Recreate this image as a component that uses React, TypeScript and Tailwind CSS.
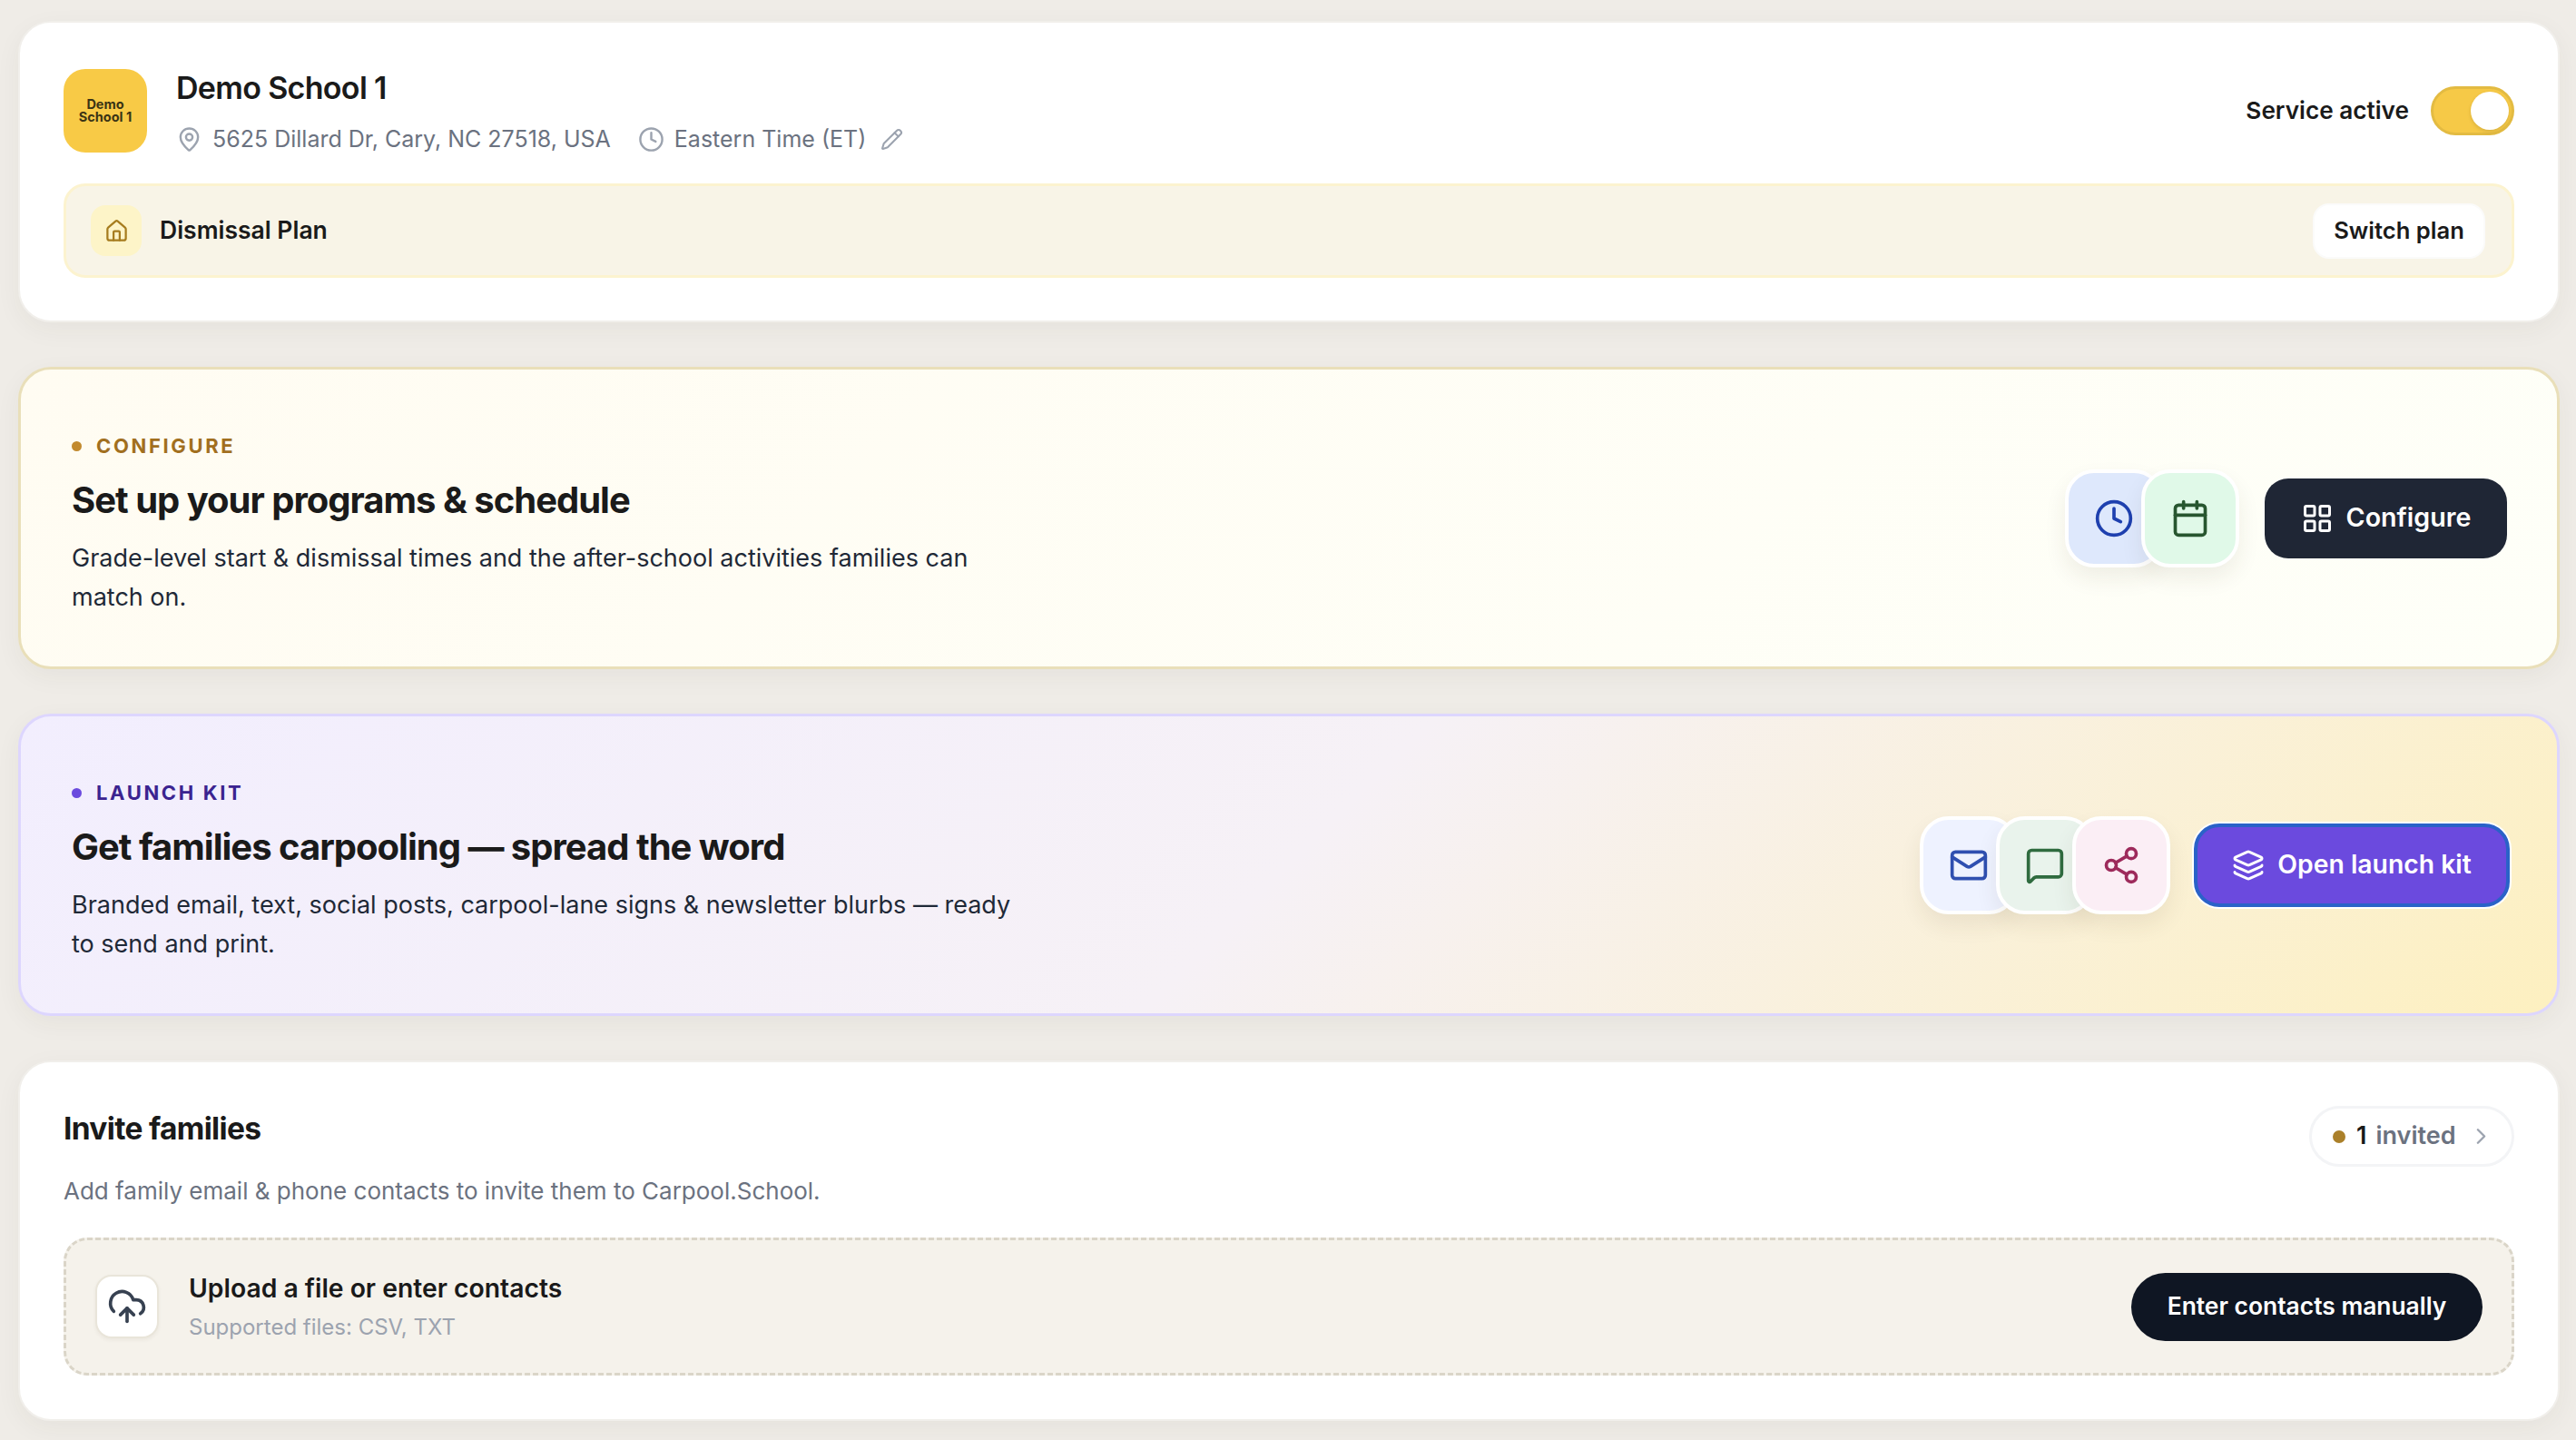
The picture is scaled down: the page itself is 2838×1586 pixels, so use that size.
import React from 'react';
import {
  Calendar,
  ChevronRight,
  Clock,
  CloudUpload,
  House,
  Layers,
  LayoutGrid,
  Mail,
  MapPin,
  MessageSquare,
  Pencil,
  Share2,
} from 'lucide-react';

const Tile: React.FC<{ className: string; first?: boolean; children: React.ReactNode }> = ({ className, first, children }) => (
  <div
    className={`flex h-[108px] w-[108px] items-center justify-center rounded-[32px] border-[4px] border-white shadow-[0_12px_24px_rgba(60,50,20,0.08)] ${first ? '' : '-ml-[24px]'} ${className}`}
  >
    {children}
  </div>
);

export default function App() {
  return (
    <div className="flex h-[1586px] flex-col gap-[49px] overflow-hidden bg-[#efece7] pb-[22px] pl-[20px] pr-[18px] pt-[23px] font-['Inter',sans-serif] text-[#1a1a1a]">
      {/* School header */}
      <section className="h-[332px] shrink-0 rounded-[36px] border-2 border-[#f1efeb] bg-white px-[48px] pt-[50px] shadow-[0_8px_28px_rgba(60,50,30,0.05)]">
        <div className="flex items-center justify-between">
          <div className="flex items-center gap-[32px]">
            <div className="flex h-[92px] w-[92px] items-center justify-center rounded-[24px] bg-[#f8ca46] text-center text-[14.5px] font-bold leading-[14.5px] text-[#3a3314]">
              Demo
              <br />
              School 1
            </div>
            <div>
              <h1 className="text-[34px] font-semibold leading-[44px] tracking-[-0.02em]">Demo School 1</h1>
              <div className="mt-[18px] flex items-center text-[25px] leading-[32px] text-[#6b7280]">
                <MapPin className="mr-[11px] h-[29px] w-[29px] text-[#9ca3af]" />
                <span>5625 Dillard Dr, Cary, NC 27518, USA</span>
                <Clock className="ml-[30px] mr-[11px] h-[29px] w-[29px] text-[#9ca3af]" />
                <span>Eastern Time (ET)</span>
                <Pencil className="ml-[16px] h-[25px] w-[25px] text-[#9ca3af]" />
              </div>
            </div>
          </div>
          <div className="flex items-center gap-[24px]">
            <span className="text-[26.2px] font-semibold">Service active</span>
            <div className="flex h-[54px] w-[92px] items-center justify-end rounded-full border-[3px] border-[#e3bb42] bg-[#f6c947] pr-[3px]">
              <div className="h-[42px] w-[42px] rounded-full bg-white shadow-[0_2px_4px_rgba(0,0,0,0.12)]" />
            </div>
          </div>
        </div>
        <div className="mt-[33px] flex h-[104px] items-center justify-between rounded-[24px] border-[3px] border-[#fcf3cf] bg-[#f8f4e7] pl-[27px] pr-[29px]">
          <div className="flex items-center gap-[20px]">
            <div className="flex h-[56px] w-[56px] items-center justify-center rounded-[16px] bg-[#fdf4c8]">
              <House className="h-[27px] w-[27px] text-[#a67c1e]" />
            </div>
            <span className="text-[26.5px] font-semibold">Dismissal Plan</span>
          </div>
          <button className="h-[61px] w-[190px] rounded-[18px] border-2 border-[#fbfbfa] bg-white text-[25.6px] font-semibold">
            Switch plan
          </button>
        </div>
      </section>

      {/* Configure */}
      <section className="flex h-[333px] shrink-0 items-center justify-between rounded-[36px] border-[3px] border-[#e9dfb9] bg-[linear-gradient(135deg,#fffcf2,#fefff8)] pl-[56px] pr-[55px] shadow-[0_8px_28px_rgba(60,50,30,0.05)]">
        <div className="w-[1050px] pt-[14px]">
          <div className="flex items-center gap-[16px] text-[22px] font-bold leading-[30px] tracking-[0.12em] text-[#a16f1f]">
            <span className="h-[11px] w-[11px] rounded-full bg-[#c28a2e]" />
            CONFIGURE
          </div>
          <h2 className="mt-[19px] text-[40px] font-bold leading-[52px] tracking-[-0.025em]">Set up your programs &amp; schedule</h2>
          <p className="mt-[16px] text-[27px] leading-[43px] text-[#1f2937]">
            Grade-level start &amp; dismissal times and the after-school activities families can match on.
          </p>
        </div>
        <div className="flex items-center gap-[28px]">
          <div className="flex">
            <Tile first className="bg-[#dee8fc]">
              <Clock className="h-[44px] w-[44px] text-[#1e40af]" />
            </Tile>
            <Tile className="bg-[#e0f9e8]">
              <Calendar className="h-[44px] w-[44px] text-[#27562f]" />
            </Tile>
          </div>
          <button className="flex h-[88px] w-[267px] items-center justify-center gap-[14px] rounded-[26px] bg-[#1f2635] text-[28.6px] font-semibold text-white">
            <LayoutGrid className="h-[36px] w-[36px]" />
            Configure
          </button>
        </div>
      </section>

      {/* Launch kit */}
      <section className="flex h-[333px] shrink-0 items-center justify-between rounded-[36px] border-[3px] border-[#ddd6fe] bg-[linear-gradient(135deg,#f2eefe_0%,#f6f1f6_50%,#fdf0c0_100%)] pl-[56px] pr-[55px] shadow-[0_8px_28px_rgba(60,50,30,0.05)]">
        <div className="w-[1050px] pt-[14px]">
          <div className="flex items-center gap-[16px] text-[22px] font-bold leading-[30px] tracking-[0.12em] text-[#3b2390]">
            <span className="h-[11px] w-[11px] rounded-full bg-[#6b4ade]" />
            LAUNCH KIT
          </div>
          <h2 className="mt-[19px] text-[40px] font-bold leading-[52px] tracking-[-0.025em]">Get families carpooling — spread the word</h2>
          <p className="mt-[16px] text-[27px] leading-[43px] text-[#1f2937]">
            Branded email, text, social posts, carpool-lane signs &amp; newsletter blurbs — ready to send and print.
          </p>
        </div>
        <div className="-mr-[3px] flex items-center gap-[26px]">
          <div className="flex">
            <Tile first className="bg-[#eef2ff]">
              <Mail className="h-[44px] w-[44px] text-[#2f4fb0]" />
            </Tile>
            <Tile className="bg-[#e9f3ec]">
              <MessageSquare className="h-[44px] w-[44px] text-[#2f6b3f]" />
            </Tile>
            <Tile className="bg-[#fbeef5]">
              <Share2 className="h-[44px] w-[44px] text-[#9d2a5b]" />
            </Tile>
          </div>
          <button className="flex h-[92px] w-[348px] items-center justify-center gap-[14px] rounded-[28px] border-[4px] border-[#2a62c8] bg-[#6b4ade] text-[28.3px] font-semibold text-white shadow-[0_0_0_2px_#ffffff]">
            <Layers className="h-[36px] w-[36px]" />
            Open launch kit
          </button>
        </div>
      </section>

      {/* Invite families */}
      <section className="h-[397px] shrink-0 rounded-[36px] border-2 border-[#f1efeb] bg-white px-[48px] pt-[48px] shadow-[0_8px_28px_rgba(60,50,30,0.05)]">
        <div className="flex items-start justify-between">
          <h2 className="text-[33.5px] font-bold leading-[50px] tracking-[-0.02em]">Invite families</h2>
          <div className="flex h-[67px] w-[226px] items-center rounded-full border-[3px] border-[#f3f4f6] pl-[23px] text-[27px] font-semibold">
            <span className="h-[14px] w-[14px] rounded-full bg-[#ab802a]" />
            <span className="ml-[12px]">1</span>
            <span className="ml-[10px] text-[#6b7280]">invited</span>
            <ChevronRight className="ml-[13px] h-[29px] w-[29px] text-[#9ca3af]" />
          </div>
        </div>
        <p className="mt-[7px] text-[26px] leading-[40px] text-[#6b7280]">Add family email &amp; phone contacts to invite them to Carpool.School.</p>
        <div className="mt-[31px] flex h-[152px] items-center justify-between rounded-[26px] border-[3px] border-dashed border-[#dad5c8] bg-[#f5f2eb] pl-[32px] pr-[32px]">
          <div className="flex items-center gap-[33px]">
            <div className="flex h-[70px] w-[70px] items-center justify-center rounded-[18px] border-2 border-[#e9e5da] bg-white shadow-[0_2px_4px_rgba(60,50,30,0.06)]">
              <CloudUpload className="h-[44px] w-[44px] text-[#374151]" />
            </div>
            <div>
              <div className="text-[28.3px] font-semibold leading-[36px]">Upload a file or enter contacts</div>
              <div className="mt-[9px] text-[24px] leading-[32px] text-[#9ca3af]">Supported files: CSV, TXT</div>
            </div>
          </div>
          <button className="h-[75px] w-[387px] rounded-full bg-[#0f1623] text-[26.4px] font-semibold text-white">Enter contacts manually</button>
        </div>
      </section>
    </div>
  );
}
